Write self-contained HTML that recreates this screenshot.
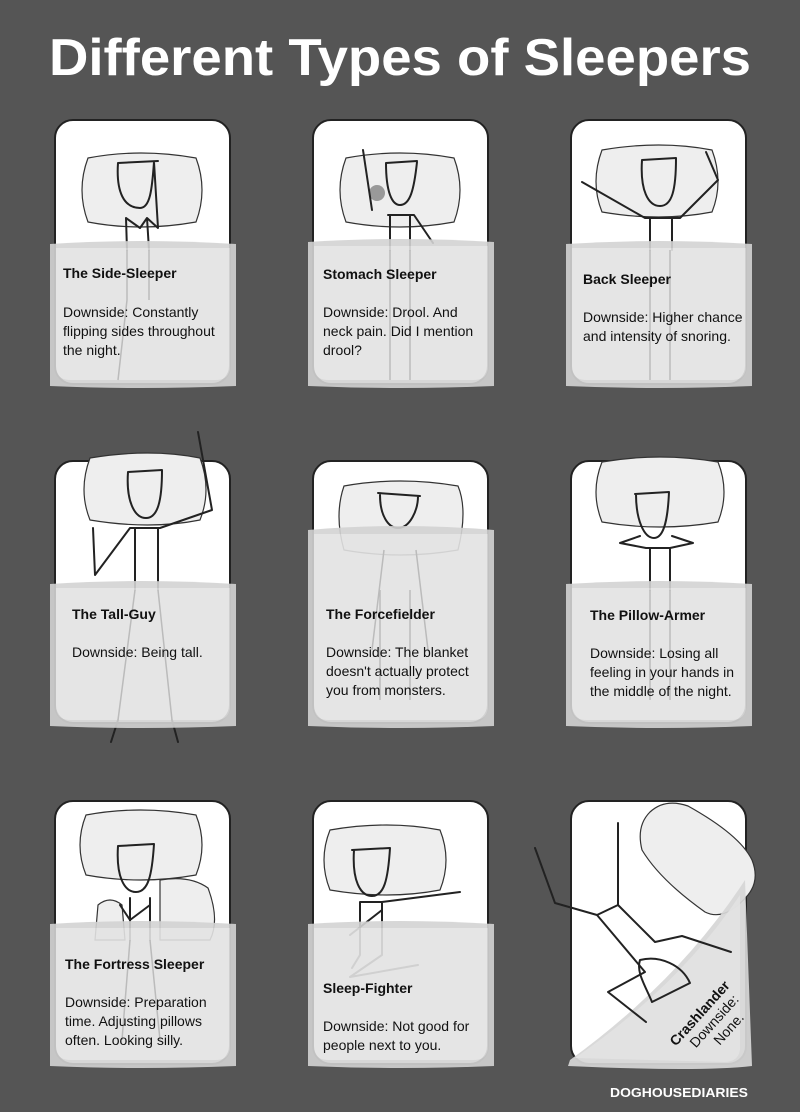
<!DOCTYPE html>
<html><head><meta charset="utf-8"><style>
html,body{margin:0;padding:0;background:#555;}
svg{display:block}
text{font-family:"Liberation Sans",sans-serif;fill:#111;font-size:14px}
.t{font-weight:bold}
.f{fill:none;stroke:#222;stroke-width:2;stroke-linejoin:round;stroke-linecap:round}
.p{fill:#eee;stroke:#333;stroke-width:1.2}
.bed{fill:#fff;stroke:#222;stroke-width:2}
.bo{fill:#d3d3d3}
.bi{fill:#e3e3e3}
</style></head><body>
<svg width="800" height="1112" viewBox="0 0 800 1112">
<rect width="800" height="1112" fill="#555"/>
<text x="400" y="75" text-anchor="middle" style="font-size:52px;fill:#fff;font-weight:bold" textLength="702" lengthAdjust="spacingAndGlyphs">Different Types of Sleepers</text>

<rect class="bed" x="55" y="120" width="175" height="264" rx="18"/>
<rect class="bed" x="313" y="120" width="175" height="264" rx="18"/>
<rect class="bed" x="571" y="120" width="175" height="264" rx="18"/>

<path class="p" d="M88 158 Q140 148 196 158 Q208 190 196 222 Q140 232 88 222 Q76 190 88 158Z"/>
<path class="f" d="M118 163 L158 161 M118 163 C116 192 124 208 140 208 C150 208 152 190 154 162 M154 162 L158 228 L147 218 L140 228 L126 218 L127 250 M147 218 L149 250"/>
<path class="p" d="M346 158 Q400 148 454 158 Q466 190 454 222 Q400 232 346 222 Q334 190 346 158Z"/>
<circle cx="377" cy="193" r="8" fill="#999"/>
<path class="f" d="M363 150 L372 210 M386 163 L417 161 M386 163 C386 192 392 205 400 205 C410 205 414 190 417 162 M388 215 L414 215 L433 243 M390 215 L390 250 M410 215 L410 250"/>
<path class="p" d="M602 150 Q660 140 712 150 Q724 182 712 212 Q660 222 602 212 Q590 182 602 150Z"/>
<path class="f" d="M642 160 L676 158 M642 160 C640 190 648 206 660 206 C672 206 676 190 676 158 M582 182 L645 218 L680 218 L718 180 L706 152 M650 218 L650 250 M672 218 L672 250"/>

<rect class="bed" x="55" y="461" width="175" height="262" rx="18"/>
<rect class="bed" x="313" y="461" width="175" height="262" rx="18"/>
<rect class="bed" x="571" y="461" width="175" height="262" rx="18"/>
<path class="p" d="M90 458 Q150 448 200 458 Q212 490 200 520 Q150 530 90 520 Q78 490 90 458Z"/>
<path class="f" d="M128 472 L162 470 M128 472 C126 500 134 518 146 518 C158 518 162 500 162 470 M198 432 L212 510 L160 528 L130 528 L95 575 L93 528 M135 528 L135 590 M158 528 L158 590"/>
<path class="f" d="M118 720 L111 742 M172 720 L178 742"/>
<path class="p" d="M344 486 Q400 476 458 486 Q468 510 458 550 Q400 560 344 550 Q334 515 344 486Z"/>
<path class="f" d="M378 493 L420 496 M380 495 C380 515 388 528 398 528 C410 528 418 510 418 496"/>
<path class="p" d="M602 462 Q660 452 718 462 Q730 492 718 522 Q660 532 602 522 Q590 492 602 462Z"/>
<path class="f" d="M635 494 L669 492 M636 494 C636 520 644 538 654 538 C665 538 668 515 669 492 M640 536 L620 543 L646 548 L670 548 L693 543 L672 536 M650 548 L650 590 M670 548 L670 590"/>

<rect class="bed" x="55" y="801" width="175" height="263" rx="18"/>
<rect class="bed" x="313" y="801" width="175" height="263" rx="18"/>
<path class="p" d="M86 815 Q140 805 196 815 Q208 845 196 875 Q140 885 86 875 Q74 845 86 815Z"/>
<path class="p" d="M160 880 Q190 875 208 888 Q220 920 210 940 L160 940Z"/>
<path class="p" d="M98 905 Q110 895 122 905 L125 940 L95 940Z"/>
<path class="f" d="M118 846 L154 844 M118 846 C116 876 124 892 136 892 C148 892 152 876 154 844 M130 898 L130 940 M150 898 L150 940 M120 905 L130 920 L150 905"/>
<path class="p" d="M330 830 Q388 820 440 830 Q452 860 440 890 Q388 900 330 890 Q318 860 330 830Z"/>
<path class="f" d="M352 850 L390 848 M354 850 C352 880 360 896 372 896 C384 896 388 880 390 848 M360 902 L382 902 L460 892 M382 902 L382 955 M360 902 L360 955 M382 910 L350 935 M382 955 L350 977 L418 965 M360 955 L352 968"/>

<rect x="571" y="801" width="175" height="263" rx="18" fill="#fff" stroke="#222" stroke-width="2"/>
<path class="p" d="M650 812 Q665 798 688 806 Q740 835 752 860 Q760 880 748 895 Q725 922 705 912 Q660 880 642 850 Q636 826 650 812Z"/>
<path d="M570 1060 Q680 980 745 880 L752 1066 Q700 1072 568 1066Z" fill="#d6d6d6" opacity="0.93"/>
<path d="M575 1058 Q680 985 740 895 L740 1050 Q738 1062 724 1062Z" fill="#e2e2e2" opacity="0.9"/>
<path class="f" d="M535 848 L555 903 L597 915 L618 905 L618 823 M597 915 L645 972 L608 992 L646 1022 M618 905 L655 942 L682 936 L731 952"/>
<path class="f" d="M640 960 C660 955 682 965 690 983 L652 1002 C645 985 636 972 640 960Z"/>
<g transform="rotate(-48 700 1020)">
<text class="t" x="664" y="1020">Crashlander</text>
<text x="676" y="1036">Downside:</text>
<text x="694" y="1052">None.</text>
</g>

<g opacity="0.9">
<path class="bo" d="M50 244 Q140 238 236 244 L236 386 Q140 390 50 386Z"/>
<path class="bi" d="M56 248 L230 248 L230 366 Q230 380 216 380 L70 380 Q56 380 56 366Z"/>
<path class="bo" d="M308 242 Q400 236 494 242 L494 386 Q400 390 308 386Z"/>
<path class="bi" d="M314 246 L488 246 L488 366 Q488 380 474 380 L328 380 Q314 380 314 366Z"/>
<path class="bo" d="M566 244 Q660 238 752 244 L752 386 Q660 390 566 386Z"/>
<path class="bi" d="M572 248 L746 248 L746 366 Q746 380 732 380 L586 380 Q572 380 572 366Z"/>
<path class="bo" d="M50 584 Q140 578 236 584 L236 726 Q140 730 50 726Z"/>
<path class="bi" d="M56 588 L230 588 L230 706 Q230 720 216 720 L70 720 Q56 720 56 706Z"/>
<path class="bo" d="M308 530 Q400 522 494 530 L494 726 Q400 730 308 726Z"/>
<path class="bi" d="M314 534 L488 534 L488 706 Q488 720 474 720 L328 720 Q314 720 314 706Z"/>
<path class="bo" d="M566 584 Q660 578 752 584 L752 726 Q660 730 566 726Z"/>
<path class="bi" d="M572 588 L746 588 L746 706 Q746 720 732 720 L586 720 Q572 720 572 706Z"/>
<path class="bo" d="M50 924 Q140 918 236 924 L236 1066 Q140 1070 50 1066Z"/>
<path class="bi" d="M56 928 L230 928 L230 1046 Q230 1060 216 1060 L70 1060 Q56 1060 56 1046Z"/>
<path class="bo" d="M308 924 Q400 918 494 924 L494 1066 Q400 1070 308 1066Z"/>
<path class="bi" d="M314 928 L488 928 L488 1046 Q488 1060 474 1060 L328 1060 Q314 1060 314 1046Z"/>
</g>
<path d="M127 250 L127 300 L118 380 M149 250 L149 300 M390 250 L390 380 M410 250 L410 380 M650 250 L650 380 M670 250 L670 380 M135 590 L118 720 M158 590 L172 720 M384 550 L372 650 M416 550 L428 650 M380 590 L380 700 M410 590 L410 700 M650 590 L650 700 M670 590 L670 700 M130 940 L122 1040 M150 940 L160 1040" stroke="#bbb" stroke-width="1.5" fill="none"/>

<text class="t" x="63" y="278">The Side-Sleeper</text>
<text x="63" y="317">Downside: Constantly</text>
<text x="63" y="336">flipping sides throughout</text>
<text x="63" y="355">the night.</text>

<text class="t" x="323" y="279">Stomach Sleeper</text>
<text x="323" y="317">Downside: Drool. And</text>
<text x="323" y="336">neck pain. Did I mention</text>
<text x="323" y="355">drool?</text>

<text class="t" x="583" y="284">Back Sleeper</text>
<text x="583" y="322">Downside: Higher chance</text>
<text x="583" y="341">and intensity of snoring.</text>

<text class="t" x="72" y="619">The Tall-Guy</text>
<text x="72" y="657">Downside: Being tall.</text>

<text class="t" x="326" y="619">The Forcefielder</text>
<text x="326" y="657">Downside: The blanket</text>
<text x="326" y="676">doesn't actually protect</text>
<text x="326" y="695">you from monsters.</text>

<text class="t" x="590" y="620">The Pillow-Armer</text>
<text x="590" y="658">Downside: Losing all</text>
<text x="590" y="677">feeling in your hands in</text>
<text x="590" y="696">the middle of the night.</text>

<text class="t" x="65" y="969">The Fortress Sleeper</text>
<text x="65" y="1007">Downside: Preparation</text>
<text x="65" y="1026">time. Adjusting pillows</text>
<text x="65" y="1045">often. Looking silly.</text>

<text class="t" x="323" y="993">Sleep-Fighter</text>
<text x="323" y="1031">Downside: Not good for</text>
<text x="323" y="1050">people next to you.</text>

<text x="610" y="1097" style="fill:#fff;font-weight:bold;font-size:13px" textLength="138" lengthAdjust="spacingAndGlyphs">DOGHOUSEDIARIES</text>
</svg>
</body></html>
